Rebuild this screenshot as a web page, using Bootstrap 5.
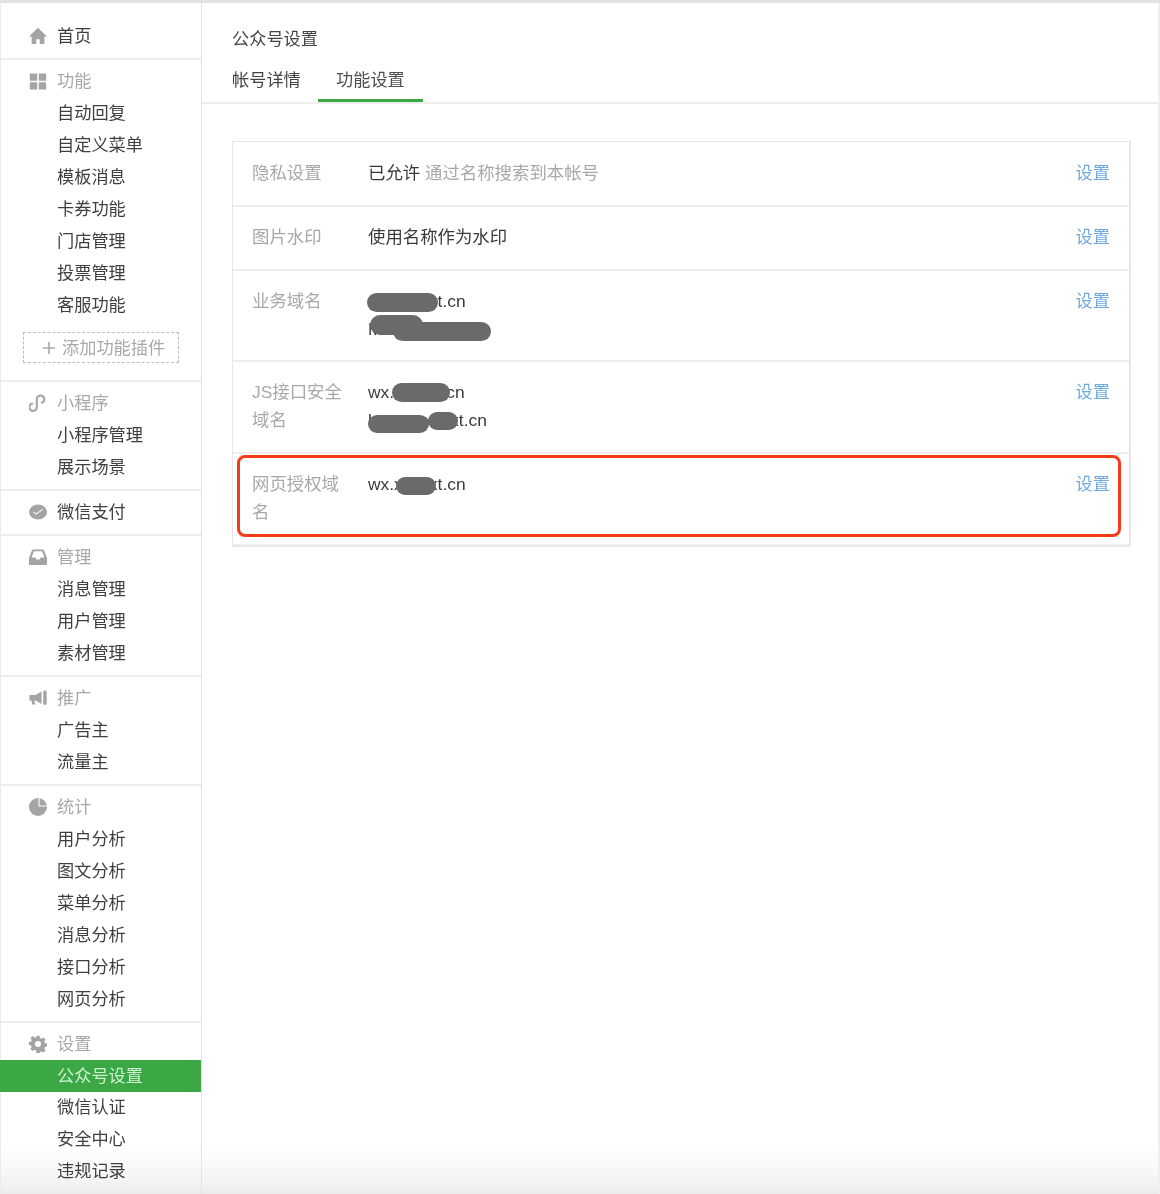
<!doctype html>
<html lang="zh-CN">
<head>
<meta charset="utf-8">
<title>公众号设置</title>
<link href="https://cdn.jsdelivr.net/npm/bootstrap@5.3.0/dist/css/bootstrap.min.css" rel="stylesheet">
<style>
html,body{height:100%;margin:0}
body{font-family:"Liberation Sans","Noto Sans CJK SC",sans-serif;font-size:17.2px;color:#3a3a3a;background:#fff}
.shot{height:1194px;overflow:hidden;border-top:3px solid #e2e2e2;background:linear-gradient(to bottom,#fff 1145px,#f3f3f3 1180px,#ebebeb 100%);filter:blur(.55px)}
.side{width:202px;flex:none;border-left:1px solid #ebebeb;border-right:1px solid #e4e4e4}
.sect{padding:5px 0 6px;border-bottom:2px solid #ededed;margin-left:-1px}
.sect.first{padding-top:17px;padding-bottom:6px}
.sect.last{border-bottom:0;padding-bottom:0}
.mi{height:32px;line-height:32px;padding-left:57px;color:#3f3f3f;white-space:nowrap}
.mi.head{display:flex;align-items:center;padding-left:29px;color:#a8a8a8}
.mi.head.dark{color:#3f3f3f}
.mi.head svg{width:18px;height:18px;margin-right:10px;fill:#a4a4a4;flex:none}
.mi.on{background:#3ba745;color:#cdf3cf;margin-bottom:-1px}
.addp{margin:11px 22px 11px 23px;height:31px;border:1px dashed #bdbdbd;color:#a9a9a9;line-height:28px;padding-left:19px;white-space:nowrap;display:flex;align-items:center}
.addp svg{width:12px;height:12px;margin-right:7px;flex:none}
.mainp{min-width:0;border-right:2px solid #efefef}
.ttl{padding:23px 0 0 30px;line-height:26px;color:#444}
.tabsx{display:flex;height:52px;border-bottom:2px solid #ededed;padding-left:12px}
.tabx{padding:0 0 0 18px;line-height:30px;margin-top:13px;height:37px;color:#444;border-bottom:3px solid transparent;width:104px;white-space:nowrap}
.tabx.on{color:#4f4f4f;border-bottom-color:#3ba745;width:105px}
.boxw{margin:37px 27px 0 30px;border:1px solid #e6e6e6;border-width:1px 2px 1px 1px;position:relative;font-size:17.4px}
.rowx{display:flex;padding:16px 19px 0 19px;border-bottom:2px solid #ededed;line-height:28px;color:#3a3a3a}
.rowx:last-child{border-bottom:0}
.rowx:first-child{padding-top:17px;height:65px}
.rh1{height:64px}.rh2{height:91px}.rh3{height:92px}
.lab{width:116px;flex:none;color:#a8a8a8;padding-right:24px}
.val{flex:1;position:relative;min-width:0}
.sub{color:#a8a8a8}
.act{color:#6fabdf;text-decoration:none;flex:none;font-size:17.2px}
.blob{position:absolute;background:#6a6a6a;border-radius:12px}
.redbox{position:absolute;left:4px;right:8px;top:313px;height:82px;border:3.500px solid #f73a1a;border-radius:8px;pointer-events:none}
</style>
</head>
<body>
<div class="shot d-flex flex-column">
<div class="d-flex flex-grow-1">
<nav class="side">
 <div class="sect first"><div class="mi head dark"><svg viewBox="0 0 18 18"><path d="M9 .8 0 9.400h2.600V17h4.600v-4.800h3.600V17h4.600V9.400H18z"/></svg>首页</div></div>
 <div class="sect">
  <div class="mi head"><svg viewBox="0 0 18 18"><rect x=".8" y="1.500" width="7.400" height="7.200" rx=".6"/><rect x="9.800" y="1.500" width="7.400" height="7.200" rx=".6"/><rect x=".8" y="10.300" width="7.400" height="7.200" rx=".6"/><rect x="9.800" y="10.300" width="7.400" height="7.200" rx=".6"/></svg>功能</div>
  <div class="mi">自动回复</div><div class="mi">自定义菜单</div><div class="mi">模板消息</div><div class="mi">卡券功能</div><div class="mi">门店管理</div><div class="mi">投票管理</div><div class="mi">客服功能</div>
  <div class="addp"><svg viewBox="0 0 12 12"><path d="M6 0v12M0 6h12" stroke="#a9a9a9" stroke-width="1.600"/></svg>添加功能插件</div>
 </div>
 <div class="sect">
  <div class="mi head"><svg viewBox="0 0 18 18"><path d="M3.200 9.600A3.700 3.700 0 1 0 7.800 13V5.200A3.700 3.700 0 1 1 12.800 8.700" fill="none" stroke="#a9a9a9" stroke-width="2.200" stroke-linecap="round"/></svg>小程序</div>
  <div class="mi">小程序管理</div><div class="mi">展示场景</div>
 </div>
 <div class="sect"><div class="mi head dark"><svg viewBox="0 0 18 18"><ellipse cx="9" cy="9" rx="9" ry="7.500"/><path d="M4.500 9 7.300 11 13.800 6.300" fill="none" stroke="#eee" stroke-width="1.300"/></svg>微信支付</div></div>
 <div class="sect">
  <div class="mi head"><svg viewBox="0 0 18 18"><path fill-rule="evenodd" d="M4.200 1.500h9.600c.6 0 1 .3 1.200.8L18 10v6c0 .6-.4 1-1 1H1c-.6 0-1-.4-1-1v-6l3-7.700c.2-.5.600-.8 1.200-.8zM4.900 3.300 2.600 9.500h3.800l1 2h3.200l1-2h3.800l-2.300-6.200z"/></svg>管理</div>
  <div class="mi">消息管理</div><div class="mi">用户管理</div><div class="mi">素材管理</div>
 </div>
 <div class="sect">
  <div class="mi head"><svg viewBox="0 0 18 18"><path d="M.5 6H6.500L12.500 2.500V15L6.500 11.500H5.300L6.300 15.500H3.300L2.300 11.500H.5Z"/><rect x="14.200" y="1.500" width="3.500" height="14.500" rx="1.700"/></svg>推广</div>
  <div class="mi">广告主</div><div class="mi">流量主</div>
 </div>
 <div class="sect">
  <div class="mi head"><svg viewBox="0 0 18 18"><circle cx="9" cy="9" r="9"/><path d="M10 0V8H18" fill="none" stroke="#fff" stroke-width="1.100"/></svg>统计</div>
  <div class="mi">用户分析</div><div class="mi">图文分析</div><div class="mi">菜单分析</div><div class="mi">消息分析</div><div class="mi">接口分析</div><div class="mi">网页分析</div>
 </div>
 <div class="sect last">
  <div class="mi head"><svg viewBox="0 0 18 18"><path fill-rule="evenodd" d="M7.500.8h3l.5 2.300 1.500.6 2-1.300 2.100 2.100-1.300 2 .6 1.500 2.300.5v3l-2.300.5-.6 1.500 1.300 2-2.100 2.100-2-1.300-1.500.6-.5 2.300h-3L7 15.400l-1.500-.6-2 1.300-2.100-2.100 1.300-2-.6-1.500-2.300-.5v-3l2.300-.5.6-1.500-1.300-2 2.100-2.100 2 1.300L7 3.100zM9 6a3 3 0 1 0 0 6 3 3 0 0 0 0-6z"/></svg>设置</div>
  <div class="mi on">公众号设置</div><div class="mi">微信认证</div><div class="mi">安全中心</div><div class="mi">违规记录</div>
 </div>
</nav>
<main class="mainp flex-grow-1">
 <div class="ttl">公众号设置</div>
 <div class="tabsx"><div class="tabx">帐号详情</div><div class="tabx on">功能设置</div></div>
 <div class="boxw">
  <div class="rowx rh1"><div class="lab">隐私设置</div><div class="val"><span>已允许</span> <span class="sub">通过名称搜索到本帐号</span></div><a class="act" href="#">设置</a></div>
  <div class="rowx rh1"><div class="lab">图片水印</div><div class="val">使用名称作为水印</div><a class="act" href="#">设置</a></div>
  <div class="rowx rh2"><div class="lab">业务域名</div><div class="val">wx.xxxxxt.cn<br>Mxx<i class="blob" style="left:-1px;top:6px;width:71px;height:19px"></i><i class="blob" style="left:2px;top:28px;width:53px;height:20px"></i><i class="blob" style="left:25px;top:35px;width:98px;height:19px"></i></div><a class="act" href="#">设置</a></div>
  <div class="rowx rh3"><div class="lab">JS接口安全域名</div><div class="val">wx.xxxxxxcn<br>lxxxxxxxxxxt.cn<i class="blob" style="left:24px;top:5px;width:58px;height:19px"></i><i class="blob" style="left:0;top:37px;width:61px;height:18px"></i><i class="blob" style="left:60px;top:34px;width:30px;height:18px"></i></div><a class="act" href="#">设置</a></div>
  <div class="rowx rh3"><div class="lab">网页授权域名</div><div class="val">wx.xxxxxt.cn<i class="blob" style="left:28px;top:7px;width:40px;height:18px"></i></div><a class="act" href="#">设置</a></div>
  <div class="redbox"></div>
 </div>
</main>
</div>
</div>
<script src="https://cdn.jsdelivr.net/npm/bootstrap@5.3.0/dist/js/bootstrap.bundle.min.js"></script>
</body>
</html>
